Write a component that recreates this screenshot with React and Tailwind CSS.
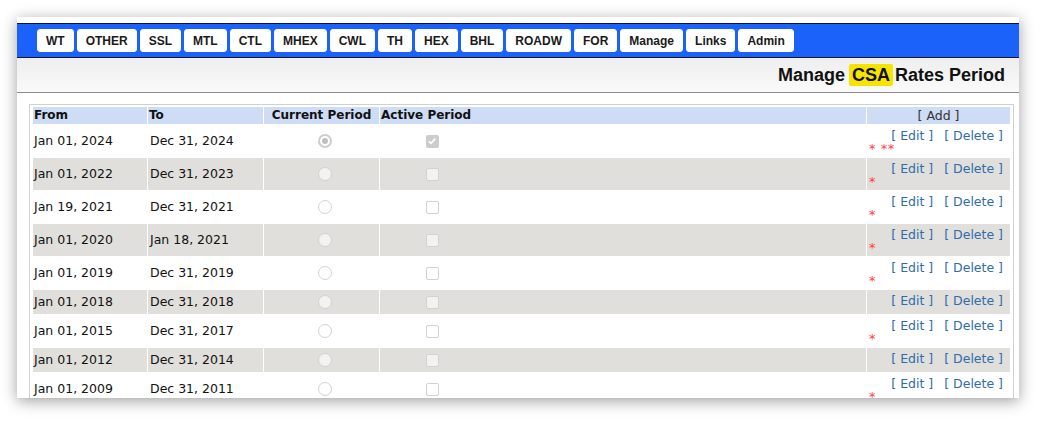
const tabs = ["WT", "OTHER", "SSL", "MTL", "CTL", "MHEX", "CWL", "TH", "HEX", "BHL", "ROADW", "FOR", "Manage", "Links", "Admin"];

const periods = [
  { from: "Jan 01, 2024", to: "Dec 31, 2024", current: true, active: true, marks: "* **" },
  { from: "Jan 01, 2022", to: "Dec 31, 2023", marks: "*" },
  { from: "Jan 19, 2021", to: "Dec 31, 2021", marks: "*" },
  { from: "Jan 01, 2020", to: "Jan 18, 2021", marks: "*" },
  { from: "Jan 01, 2019", to: "Dec 31, 2019", marks: "*" },
  { from: "Jan 01, 2018", to: "Dec 31, 2018" },
  { from: "Jan 01, 2015", to: "Dec 31, 2017", marks: "*" },
  { from: "Jan 01, 2012", to: "Dec 31, 2014" },
  { from: "Jan 01, 2009", to: "Dec 31, 2011", marks: "*" },
];

const Radio = ({ checked }) =>
  checked ? (
    <div className="w-[14px] h-[14px] rounded-full border-2 border-[#cdcdcd] bg-white flex items-center justify-center">
      <div className="w-[6px] h-[6px] rounded-full bg-[#c0c0c0]" />
    </div>
  ) : (
    <div className="w-[14px] h-[14px] rounded-full border border-[#d2d2d0] bg-white/60" />
  );

const Checkbox = ({ checked }) =>
  checked ? (
    <div className="w-[13px] h-[13px] rounded-[2px] bg-[#cccccc] flex items-center justify-center">
      <svg width="10" height="10" viewBox="0 0 10 10">
        <path d="M1.8 5.2 L4 7.4 L8.3 2.6" fill="none" stroke="white" strokeWidth="1.6" />
      </svg>
    </div>
  ) : (
    <div className="w-[13px] h-[13px] rounded-[2px] border border-[#d2d2d0] bg-white/60" />
  );

const App = () => {
  return (
    <div className="w-[1045px] h-[425px] bg-white p-[17px]">
      <div className="w-[1002px] h-[381px] overflow-hidden bg-white pt-[6px] shadow-[0_3px_14px_rgba(0,0,0,0.38)]">
        {/* top nav */}
        <div className="flex gap-[3px] px-5 py-[5px] bg-[#1b62fa] border-y border-[#0d1733] font-['Liberation_Sans',Arial,sans-serif]">
          {tabs.map((t) => (
            <div
              key={t}
              className="h-[23px] px-2 flex items-center bg-white border border-white rounded-[3px] text-[12px] font-bold text-[#1a1a1a]"
            >
              {t}
            </div>
          ))}
        </div>

        {/* page title */}
        <div className="h-[35px] flex items-center justify-end pr-[14px] border-b border-[#8a8a8a] bg-gradient-to-b from-[#eeeeee] to-[#fafafa]">
          <h1 className="text-[18px] font-bold text-[#111] font-['Liberation_Sans',Arial,sans-serif] leading-none flex items-center">
            Manage
            <span className="ml-[4px] mr-[1px] px-[3px] h-[22px] flex items-center bg-[#f6e400] rounded-[2px]">CSA</span>
            <span className="ml-[1px]">Rates Period</span>
          </h1>
        </div>

        {/* periods table */}
        <div className="mt-[11px] ml-[12px] mr-[5px] border border-[#d0d0d0] px-[2px] pt-[1px] font-['DejaVu_Sans',Verdana,sans-serif] text-[12.5px] text-[#111]">
          <table className="w-full table-fixed border-separate border-spacing-[1px]">
            <thead>
              <tr className="bg-[#cedcf5] text-[12px] font-bold leading-[17px]">
                <th className="w-[114px] text-left pl-[1px]">From</th>
                <th className="w-[115px] text-left pl-[1px]">To</th>
                <th className="w-[115px] text-center">Current Period</th>
                <th className="text-left pl-[1px]">Active Period</th>
                <th className="w-[143px] text-center font-normal text-[12.5px] text-[#333]">[ Add ]</th>
              </tr>
            </thead>
            <tbody>
              {periods.map((p, i) => (
                <tr key={p.from} className={i % 2 === 1 ? "bg-[#e0dfdb]" : "bg-white"}>
                  <td className="h-[24px] pl-[1px] leading-[16px] align-middle">{p.from}</td>
                  <td className="pl-[2px] leading-[16px] align-middle">{p.to}</td>
                  <td className="align-middle">
                    <div className="flex justify-center pl-[6px]">
                      <Radio checked={p.current} />
                    </div>
                  </td>
                  <td className="align-middle">
                    <div className="w-[104px] flex justify-center">
                      <Checkbox checked={p.active} />
                    </div>
                  </td>
                  <td className="align-top pt-[3px] pb-[3px]">
                    <div className="text-right pr-[7px] leading-[16px] text-[#2f6cab] whitespace-nowrap">
                      <span>[ Edit ]</span>
                      <span className="ml-[11px]">[ Delete ]</span>
                    </div>
                    {p.marks && (
                      <div className="pl-[2px] text-[13px] tracking-[0.5px] leading-[10px] text-[#ff4040] whitespace-pre">
                        {p.marks}
                      </div>
                    )}
                  </td>
                </tr>
              ))}
            </tbody>
          </table>
        </div>
      </div>
    </div>
  );
};

export default App;
